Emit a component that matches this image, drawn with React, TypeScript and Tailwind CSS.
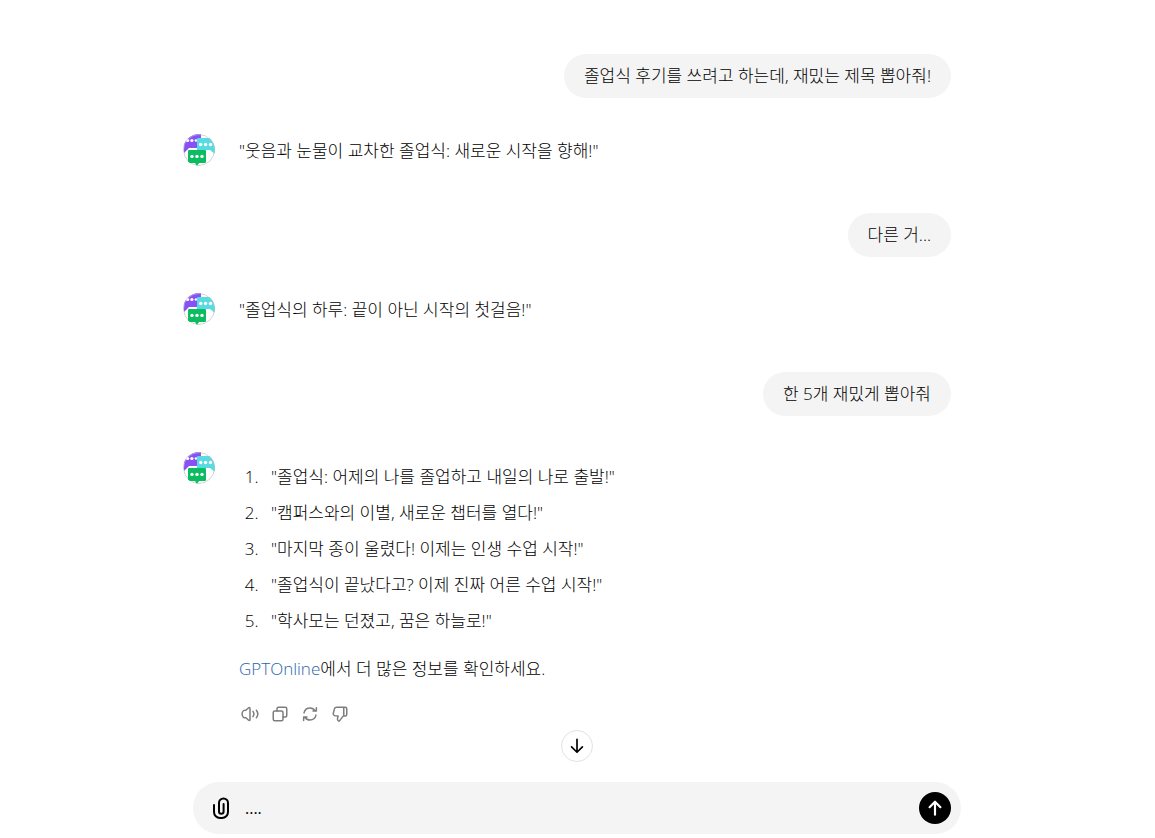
import React, { useState } from 'react';

interface IconProps {
  className?: string;
  strokeWidth?: number;
  children: React.ReactNode;
}

const Icon: React.FC<IconProps> = ({ className, strokeWidth = 2, children }) => (
  <svg
    viewBox="0 0 24 24"
    fill="none"
    stroke="currentColor"
    strokeWidth={strokeWidth}
    strokeLinecap="round"
    strokeLinejoin="round"
    className={className}
    aria-hidden="true"
  >
    {children}
  </svg>
);

const Avatar: React.FC = () => (
  <svg viewBox="0 0 32 32" className="size-8 shrink-0" role="img" aria-label="GPTOnline">
    <defs>
      <clipPath id="avatar-clip">
        <circle cx="16" cy="16" r="16" />
      </clipPath>
    </defs>
    <g clipPath="url(#avatar-clip)">
      <rect width="32" height="32" fill="#fff" />
      <path d="M0 0h18v14H6l-5 5z" fill="#8751f5" />
      <path d="M15 4h17v16l-5-4H14V5a1 1 0 0 1 1-1z" fill="#56dbe3" />
      <circle cx="16" cy="16" r="15.5" fill="none" stroke="#bdbdbd" strokeOpacity="0.7" />
      <path d="M6 16h16a1 1 0 0 1 1 1v11a1 1 0 0 1-1 1h-6l-2 3-2-3H6a1 1 0 0 1-1-1V17a1 1 0 0 1 1-1z" fill="#0bbd60" />
      <g fill="#fff">
        <circle cx="4.7" cy="6.5" r="1.6" />
        <circle cx="8.9" cy="6.5" r="1.6" />
        <circle cx="12.9" cy="6.5" r="1.2" />
        <circle cx="17.7" cy="10.5" r="1.7" />
        <circle cx="22.6" cy="10.5" r="1.7" />
        <circle cx="27.5" cy="10.5" r="1.7" />
        <circle cx="9" cy="22.4" r="1.7" />
        <circle cx="14" cy="22.4" r="1.7" />
        <circle cx="19" cy="22.4" r="1.7" />
      </g>
    </g>
  </svg>
);

const UserMessage: React.FC<{ text: string }> = ({ text }) => (
  <div className="flex justify-end">
    <p className="rounded-full bg-[#f4f4f4] px-5 py-2 leading-7">{text}</p>
  </div>
);

const AssistantMessage: React.FC<{ children: React.ReactNode }> = ({ children }) => (
  <div className="flex gap-6 pt-9">
    <Avatar />
    <div className="min-w-0 flex-1">{children}</div>
  </div>
);

const titles = [
  '"졸업식: 어제의 나를 졸업하고 내일의 나로 출발!"',
  '"캠퍼스와의 이별, 새로운 챕터를 열다!"',
  '"마지막 종이 울렸다! 이제는 인생 수업 시작!"',
  '"졸업식이 끝났다고? 이제 진짜 어른 수업 시작!"',
  '"학사모는 던졌고, 꿈은 하늘로!"',
];

const actions = [
  {
    label: '소리내어 읽기',
    icon: (
      <>
        <path d="M12 4.500v15c0 1-1 1.400-1.800.8L6.500 17H5C3 17 1.500 14.500 1.500 12S3 7 5 7h1.500l3.700-3.300C11 3.100 12 3.500 12 4.500z" />
        <path d="M16 8.500c1.300 2 1.300 5 0 7M20.500 7c2.300 3 2.300 7 0 10" />
      </>
    ),
  },
  {
    label: '복사',
    icon: (
      <>
        <rect x="3" y="8" width="13" height="13" rx="2" />
        <path d="M8 8V5a2 2 0 0 1 2-2h9a2 2 0 0 1 2 2v9a2 2 0 0 1-2 2h-3" />
      </>
    ),
  },
  {
    label: '다시 생성',
    icon: (
      <>
        <path d="M4 10.500C5 6.500 8.300 4 12 4c3 0 5.500 1.500 7 4M20.500 3.500V8H16" />
        <path d="M20 13.500C19 17.500 15.700 20 12 20c-3 0-5.500-1.500-7-4M3.500 20.500V16H8" />
      </>
    ),
  },
  {
    label: '별로예요',
    icon: (
      <path d="M17 3v11M11 21.500l5.500-7H19a2 2 0 0 0 2-2V5a2 2 0 0 0-2-2H7.500a3 3 0 0 0-2.900 2.200L3.200 10.500A3 3 0 0 0 6 14.500h3.500l-.8 3.500C8.300 20 9.500 21.500 11 21.500z" />
    ),
  },
];

export default function App() {
  const [draft, setDraft] = useState('....');

  return (
    <div className="flex min-h-screen flex-col bg-white pr-px font-['Open_Sans','Noto_Sans_CJK_KR',sans-serif] text-[17px] font-light text-black">
      {/* Conversation */}
      <main className="flex-1 pt-[54px] pr-5">
        <div className="mx-auto max-w-3xl">
          <UserMessage text="졸업식 후기를 쓰려고 하는데, 재밌는 제목 뽑아줘!" />
          <AssistantMessage>
            <p className="pt-[3px] pb-12 leading-7">"웃음과 눈물이 교차한 졸업식: 새로운 시작을 향해!"</p>
          </AssistantMessage>
          <UserMessage text="다른 거..." />
          <AssistantMessage>
            <p className="pt-[3px] pb-12 leading-7">"졸업식의 하루: 끝이 아닌 시작의 첫걸음!"</p>
          </AssistantMessage>
          <UserMessage text="한 5개 재밌게 뽑아줘" />
          <AssistantMessage>
            <ol className="list-decimal space-y-2 pt-[11px] pl-6 leading-7">
              {titles.map((title) => (
                <li key={title} className="pl-2">{title}</li>
              ))}
            </ol>
            <p className="mt-5 leading-7">
              <a href="#" className="text-[#2964aa]">GPTOnline</a>에서 더 많은 정보를 확인하세요.
            </p>
            <div className="mt-[19px] ml-0.5 flex gap-3">
              {actions.map(({ label, icon }) => (
                <button
                  key={label}
                  type="button"
                  aria-label={label}
                  className="flex h-6 items-center text-[#7d7d7d]"
                >
                  <Icon className="size-[18px]">{icon}</Icon>
                </button>
              ))}
            </div>
          </AssistantMessage>
        </div>
      </main>

      {/* Scroll to bottom */}
      <div className="flex justify-center pt-1 pb-5">
        <button
          type="button"
          aria-label="맨 아래로"
          className="flex size-8 items-center justify-center rounded-full border border-[#e3e3e3] bg-white"
        >
          <Icon className="size-5">
            <path d="M12 4v15M5.500 13l6.500 6.500 6.500-6.500" />
          </Icon>
        </button>
      </div>

      {/* Composer */}
      <form
        className="mx-auto mb-1 flex w-full max-w-3xl items-center rounded-full bg-[#f4f4f4] py-2.5 pr-2.5 pl-4"
        onSubmit={(e) => e.preventDefault()}
      >
        <button type="button" aria-label="파일 첨부" className="mr-3 shrink-0">
          <Icon className="size-6">
            <path d="M5 9v7a6 6 0 0 0 6 6h2a6 6 0 0 0 6-6V7a4.500 4.500 0 0 0-9 0v8.500a2.300 2.300 0 0 0 4.600 0V8" />
          </Icon>
        </button>
        <input
          type="text"
          aria-label="메시지"
          value={draft}
          onChange={(e) => setDraft(e.target.value)}
          className="h-7 min-w-0 flex-1 bg-transparent text-base font-normal outline-none"
        />
        <button
          type="submit"
          aria-label="보내기"
          className="flex size-8 shrink-0 items-center justify-center rounded-full bg-black text-white"
        >
          <Icon className="size-5" strokeWidth={2.6}>
            <path d="M12 20V5M5.500 11L12 4.500l6.500 6.500" />
          </Icon>
        </button>
      </form>
    </div>
  );
}
